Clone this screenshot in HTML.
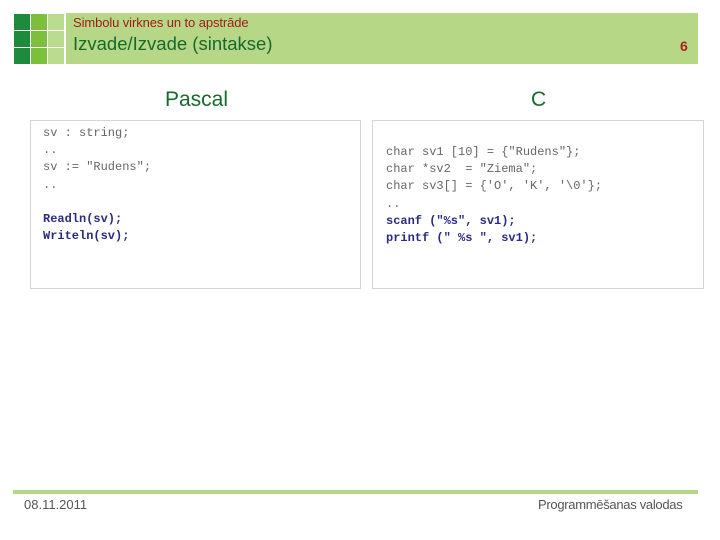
<!DOCTYPE html>
<html><head><meta charset="utf-8"><style>
*{margin:0;padding:0;box-sizing:border-box}
body{width:720px;height:540px;background:#fff;position:relative;overflow:hidden;font-family:"Liberation Sans",sans-serif}
.sq{position:absolute;width:16px;height:16px}
.c1{background:#1e8a3c}.c2{background:#7cbf3a}.c3{background:#b9dc8f}
.band{position:absolute;left:66px;top:13px;width:632px;height:51px;background:#b6d886}
.sub{position:absolute;left:73px;top:15px;font-size:13px;color:#a11d1d;letter-spacing:-0.1px}
.title{position:absolute;left:73px;top:33px;font-size:18.5px;color:#17692e}
.num{position:absolute;left:680px;top:38px;font-size:14px;color:#b02020;font-weight:bold}
.h{position:absolute;font-size:21px;color:#17692e}
.box{position:absolute;border:1px solid #d4d4d4;background:#fff}
pre{position:absolute;font-family:"Liberation Mono",monospace;font-size:12px;line-height:17.2px;color:#666}
b{color:#2a2a80}
.line{position:absolute;left:13px;top:490px;width:685px;height:4px;background:#b6d886}
.foot{position:absolute;top:497px;font-size:13px;color:#555}
</style></head><body>
<div class="sq c1" style="left:14px;top:14px"></div><div class="sq c2" style="left:31px;top:14px"></div><div class="sq c3" style="left:48px;top:14px"></div>
<div class="sq c1" style="left:14px;top:31px"></div><div class="sq c2" style="left:31px;top:31px"></div><div class="sq c3" style="left:48px;top:31px"></div>
<div class="sq c1" style="left:14px;top:48px"></div><div class="sq c2" style="left:31px;top:48px"></div><div class="sq c3" style="left:48px;top:48px"></div>
<div class="band"></div>
<div class="sub">Simbolu virknes un to apstrāde</div>
<div class="title">Izvade/Izvade (sintakse)</div>
<div class="num">6</div>
<div class="h" style="left:165px;top:88px">Pascal</div>
<div class="h" style="left:531px;top:88px">C</div>
<div class="box" style="left:30px;top:120px;width:331px;height:169px"></div>
<div class="box" style="left:372px;top:120px;width:332px;height:169px"></div>
<pre style="left:43px;top:125px">sv : string;
..
sv := "Rudens";
..

<b>Readln(sv);
Writeln(sv);</b></pre>
<pre style="left:386px;top:144px">char sv1 [10] = {"Rudens"};
char *sv2  = "Ziema";
char sv3[] = {'O', 'K', '\0'};
..
<b>scanf ("%s", sv1);
printf (" %s ", sv1);</b></pre>
<div class="line"></div>
<div class="foot" style="left:24px">08.11.2011</div>
<div class="foot" style="left:538px;letter-spacing:-0.3px">Programmēšanas valodas</div>
</body></html>
